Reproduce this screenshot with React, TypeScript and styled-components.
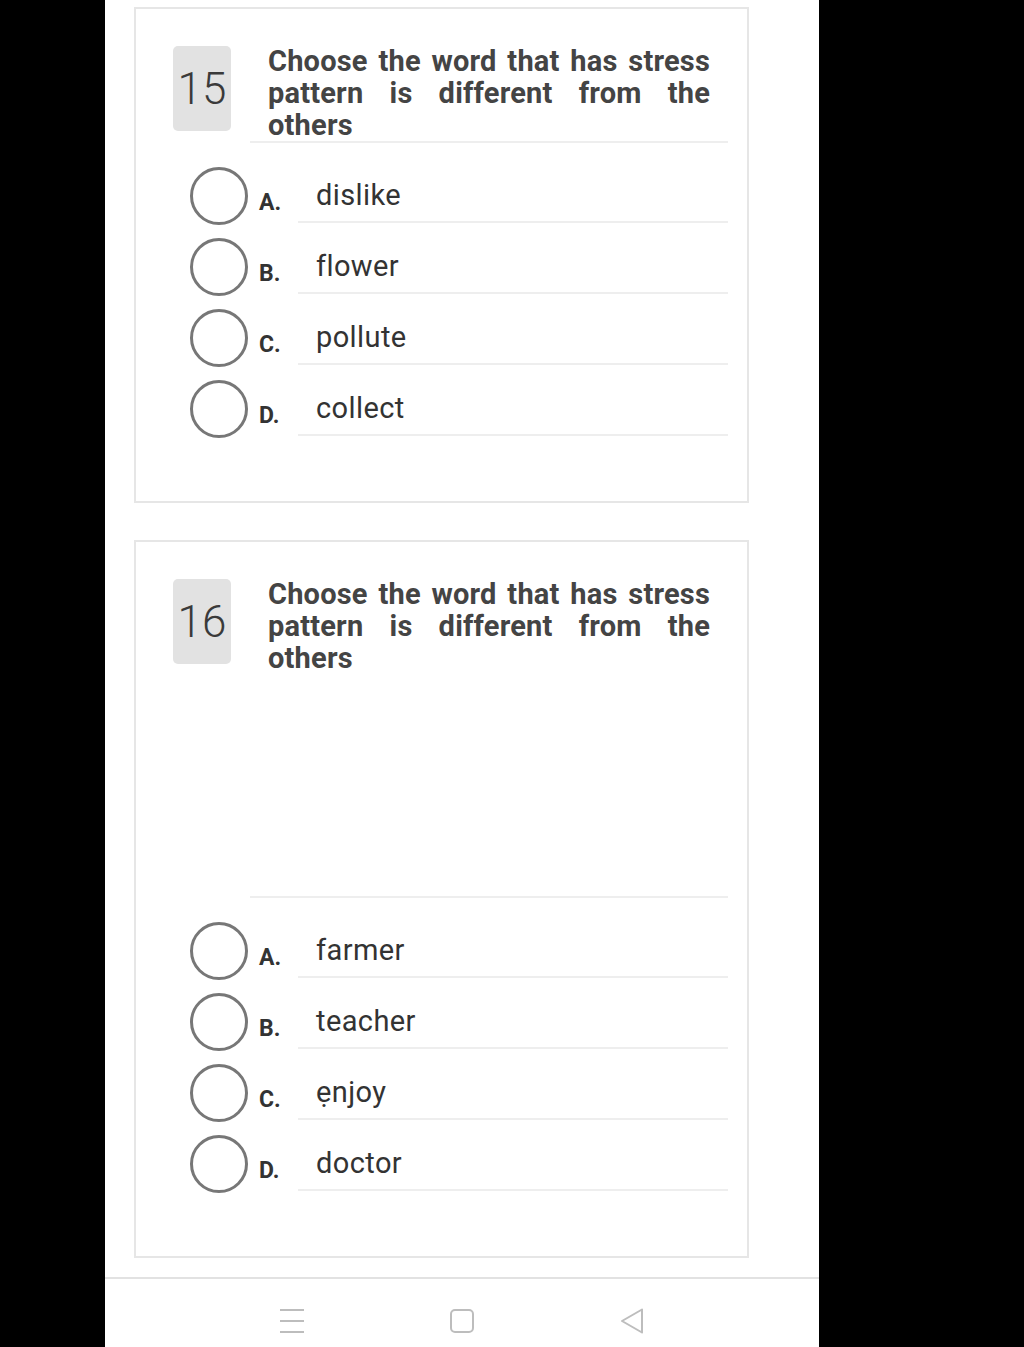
import * as React from "react";
import styled, { createGlobalStyle } from "styled-components";

const GlobalStyle = createGlobalStyle`
  html, body {
    margin: 0;
    padding: 0;
    background: #000;
  }
  body {
    font-family: Roboto, "Liberation Sans", Arial, sans-serif;
  }
`;

const Screen = styled.div`
  width: 714px;
  height: 1347px;
  margin-left: 105px;
  background: #fff;
  display: flex;
  flex-direction: column;
  overflow: hidden;
`;

const Content = styled.div`
  flex: 1;
  display: flex;
  flex-direction: column;
  gap: 37px;
  padding: 7px 0 0 29px;
`;

const Card = styled.div`
  width: 615px;
  box-sizing: border-box;
  border: 2px solid #e6e6e6;
  padding: 37px 19px 63px 37px;
  display: flex;
  flex-direction: column;
`;

const Header = styled.div`
  display: flex;
  align-items: flex-start;
  gap: 19px;
  margin-bottom: 24px;
`;

const NumberBox = styled.div`
  width: 58px;
  height: 85px;
  flex: none;
  border-radius: 5px;
  background: #e2e2e2;
  display: flex;
  align-items: center;
  justify-content: center;
  font-size: 44px;
  font-weight: 300;
  color: #3a3a3a;
`;

const Question = styled.div<{ $extra: number }>`
  flex: 1;
  margin-top: -1px;
  padding: 0 18px ${(p) => p.$extra}px;
  border-bottom: 2px solid #eeeeee;
`;

const QuestionText = styled.div`
  font-size: 29px;
  line-height: 32px;
  letter-spacing: 0.2px;
  font-weight: 700;
  color: #444;
  text-align: justify;
`;

const Options = styled.div`
  display: flex;
  flex-direction: column;
  gap: 13px;
  padding-left: 17px;
`;

const Row = styled.div`
  display: flex;
  align-items: flex-start;
  height: 58px;
`;

const Radio = styled.div`
  width: 58px;
  height: 58px;
  flex: none;
  box-sizing: border-box;
  border-radius: 50%;
  border: 3px solid #777;
`;

const Letter = styled.div`
  width: 39px;
  flex: none;
  margin-left: 11px;
  padding-top: 25px;
  font-size: 23px;
  line-height: 22px;
  font-weight: 700;
  color: #333;
`;

const Field = styled.div`
  flex: 1;
  margin-top: 2px;
  height: 52px;
  line-height: 52px;
  padding-left: 18px;
  border-bottom: 2px solid #eeeeee;
  font-size: 29px;
  letter-spacing: 0.4px;
  color: #333;
`;

const NavBar = styled.div`
  height: 70px;
  flex: none;
  margin-top: 18px;
  border-top: 2px solid #e2e2e2;
  display: flex;
  justify-content: center;
  align-items: flex-start;
  gap: 144px;
  padding-top: 28px;
  box-sizing: border-box;
`;

const NavIcon = styled.svg`
  width: 26px;
  height: 28px;
  display: block;
`;

type Item = { num: number; extra: number; options: string[] };

const items: Item[] = [
  { num: 15, extra: 0, options: ["dislike", "flower", "pollute", "collect"] },
  { num: 16, extra: 222, options: ["farmer", "teacher", "ẹnjoy", "doctor"] },
];

const letters = ["A.", "B.", "C.", "D."];

const App = () => (
  <>
    <GlobalStyle />
    <Screen>
      <Content>
        {items.map((it) => (
          <Card key={it.num}>
            <Header>
              <NumberBox>{it.num}</NumberBox>
              <Question $extra={it.extra}>
                <QuestionText>
                  Choose the word that has stress pattern is different from the others
                </QuestionText>
              </Question>
            </Header>
            <Options>
              {it.options.map((o, i) => (
                <Row key={o}>
                  <Radio />
                  <Letter>{letters[i]}</Letter>
                  <Field>{o}</Field>
                </Row>
              ))}
            </Options>
          </Card>
        ))}
      </Content>
      <NavBar>
        <NavIcon viewBox="0 0 26 28">
          <path d="M1 3h24M1 14h24M1 25h24" stroke="#bdbdbd" strokeWidth="2" fill="none" />
        </NavIcon>
        <NavIcon viewBox="0 0 26 28">
          <rect x="2" y="3" width="22" height="22" rx="4" stroke="#bdbdbd" strokeWidth="2" fill="none" />
        </NavIcon>
        <NavIcon viewBox="0 0 26 28">
          <path d="M23 2.5 L3 14 L23 25.5 Z" stroke="#bdbdbd" strokeWidth="2" strokeLinejoin="round" fill="none" />
        </NavIcon>
      </NavBar>
    </Screen>
  </>
);

export default App;
